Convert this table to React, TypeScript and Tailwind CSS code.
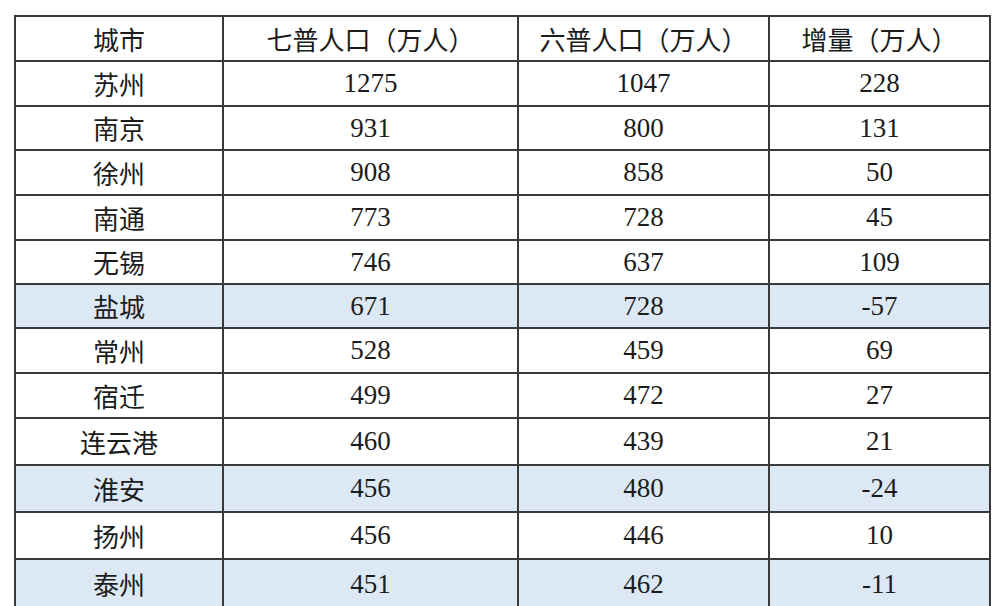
import React from 'react';

const rows: { city: string; qi: string; liu: string; diff: string; hl?: boolean }[] = [
  { city: '苏州', qi: '1275', liu: '1047', diff: '228' },
  { city: '南京', qi: '931', liu: '800', diff: '131' },
  { city: '徐州', qi: '908', liu: '858', diff: '50' },
  { city: '南通', qi: '773', liu: '728', diff: '45' },
  { city: '无锡', qi: '746', liu: '637', diff: '109' },
  { city: '盐城', qi: '671', liu: '728', diff: '-57', hl: true },
  { city: '常州', qi: '528', liu: '459', diff: '69' },
  { city: '宿迁', qi: '499', liu: '472', diff: '27' },
  { city: '连云港', qi: '460', liu: '439', diff: '21' },
  { city: '淮安', qi: '456', liu: '480', diff: '-24', hl: true },
  { city: '扬州', qi: '456', liu: '446', diff: '10' },
  { city: '泰州', qi: '451', liu: '462', diff: '-11', hl: true },
];

// row heights follow the screenshot (the lower rows are a touch taller)
const heights = [45, 44, 45, 45, 44, 44, 45, 45, 47, 47, 47, 50];

const cjk = "font-['Noto_Sans_CJK_SC','Noto_Sans',sans-serif] text-[26px]";
const num = "font-['Liberation_Serif',serif] text-[27px]";

function App() {
  return (
    <div className="w-[1000px] h-[606px] overflow-hidden bg-white pl-[14px] pt-[15px] text-[#1c1c1c]">
      <table className="table-fixed border-collapse w-[975px]">
        <colgroup>
          <col className="w-[208px]" />
          <col className="w-[295px]" />
          <col className="w-[251px]" />
          <col className="w-[221px]" />
        </colgroup>
        <thead>
          <tr className="h-[45px]">
            {['城市', '七普人口（万人）', '六普人口（万人）', '增量（万人）'].map((h) => (
              <th key={h} className={`border-2 border-[#3a3a3a] text-center font-normal leading-none p-0 ${cjk}`}>
                {h}
              </th>
            ))}
          </tr>
        </thead>
        <tbody>
          {rows.map((r, i) => (
            <tr key={r.city} style={{ height: heights[i] }} className={r.hl ? 'bg-[#dce9f5]' : ''}>
              <td className={`border-2 border-[#3a3a3a] text-center leading-none p-0 ${cjk}`}>{r.city}</td>
              <td className={`border-2 border-[#3a3a3a] text-center leading-none p-0 ${num}`}>{r.qi}</td>
              <td className={`border-2 border-[#3a3a3a] text-center leading-none p-0 ${num}`}>{r.liu}</td>
              <td className={`border-2 border-[#3a3a3a] text-center leading-none p-0 ${num}`}>{r.diff}</td>
            </tr>
          ))}
        </tbody>
      </table>
    </div>
  );
}

export default App;
